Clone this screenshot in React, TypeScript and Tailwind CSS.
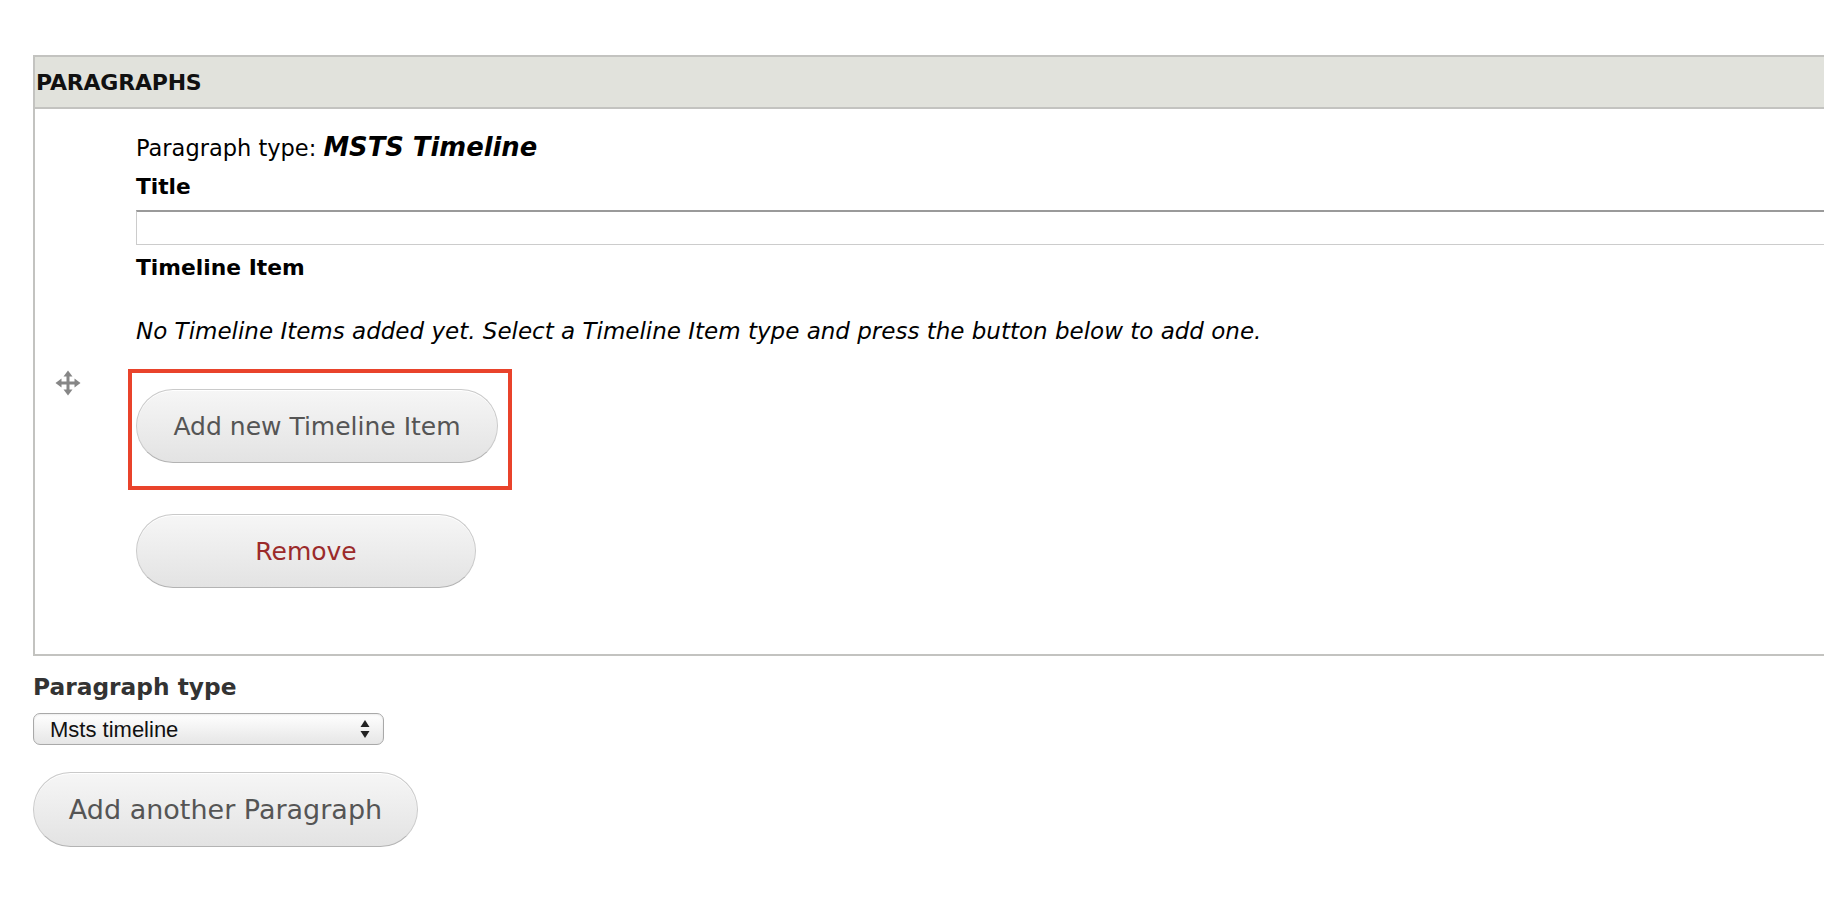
import React from 'react';

const MoveHandle: React.FC = () => (
  <svg width="26" height="26" viewBox="0 0 26 26" className="text-[#7a7a7a] opacity-90">
    <g fill="currentColor">
      <rect x="11.5" y="5" width="3" height="16" />
      <rect x="5" y="11.5" width="16" height="3" />
      <polygon points="13,0.5 8.5,6.5 17.5,6.5" />
      <polygon points="13,25.5 8.5,19.5 17.5,19.5" />
      <polygon points="0.5,13 6.5,8.5 6.5,17.5" />
      <polygon points="25.5,13 19.5,8.5 19.5,17.5" />
    </g>
  </svg>
);

const PillButton: React.FC<{ label: string; className?: string; textClass?: string }> = ({ label, className = '', textClass = 'text-[#555] text-[25px]' }) => (
  <button
    type="button"
    className={`h-[74px] rounded-full border border-[#cacaca] border-b-[#b3b3b3] bg-gradient-to-b from-[#f6f6f6] to-[#e3e3e3] leading-none shadow-[inset_0_1px_0_#fff] ${textClass} ${className}`}
  >
    {label}
  </button>
);

const App: React.FC = () => {
  return (
    <div className="w-[1824px] h-[920px] overflow-hidden bg-white font-['DejaVu_Sans','Lucida_Grande',sans-serif] text-black">
      <div className="pt-[55px] pl-[33px]">
        {/* paragraphs fieldset */}
        <div className="w-[1900px] border-2 border-[#c3c3c0]">
          <div className="h-[52px] flex items-center pl-[1px] pt-[1px] bg-[#e1e2dc] border-b-2 border-[#c3c3c0]">
            <span className="text-[22px] font-bold tracking-[-0.2px] text-[#111]">PARAGRAPHS</span>
          </div>

          <div className="flex">
            <div className="w-[101px] shrink-0 pt-[261px] pl-[20px]">
              <MoveHandle />
            </div>

            <div className="flex-1 pt-[19px] pb-[66px]">
              <div className="h-[32px] flex items-baseline">
                <span className="text-[22.5px]">Paragraph type:&nbsp;</span>
                <em className="text-[25.8px] font-bold">MSTS Timeline</em>
              </div>
              <div className="mt-[14px] text-[21.7px] font-bold leading-[26px]">Title</div>
              <div className="mt-[10px] h-[35px] border border-[#cccccc] border-t-2 border-t-[#9a9a9a]" />
              <div className="mt-[10px] text-[21.8px] font-bold leading-[26px]">Timeline Item</div>
              <p className="mt-[36px] text-[23px] italic leading-[28px]">
                No Timeline Items added yet. Select a Timeline Item type and press the button below to add one.
              </p>

              <div className="mt-[44px] relative w-[362px]">
                <span className="absolute -left-[8px] -top-[20px] -right-[14px] -bottom-[27px] border-[4px] border-[#e9432b] pointer-events-none" />
                <PillButton label="Add new Timeline Item" className="w-[362px]" />
              </div>

              <div className="mt-[51px]">
                <PillButton label="Remove" className="w-[340px]" textClass="text-[#9b2a2a] text-[25px]" />
              </div>
            </div>
          </div>
        </div>

        {/* add another paragraph */}
        <div className="mt-[17px] text-[23.3px] font-bold leading-[28px] text-[#333]">Paragraph type</div>
        <div className="mt-[12px] w-[351px] h-[32px] flex items-center justify-between pl-[16px] pr-[13px] rounded-[7px] border border-[#a9a9a9] bg-gradient-to-b from-white to-[#e6e6e6] shadow-[inset_0_1px_2px_rgba(0,0,0,0.08)]">
          <span className="font-['Liberation_Sans',Arial,sans-serif] text-[22px] text-[#111]">Msts timeline</span>
          <svg width="10" height="20" viewBox="0 0 10 20" className="text-[#222]">
            <polygon points="5,1 9.5,8 0.5,8" fill="currentColor" />
            <polygon points="5,19 9.5,12 0.5,12" fill="currentColor" />
          </svg>
        </div>
        <div className="mt-[27px]">
          <PillButton label="Add another Paragraph" className="w-[385px] h-[75px]" textClass="text-[#555] text-[27px]" />
        </div>
      </div>
    </div>
  );
};

export default App;
